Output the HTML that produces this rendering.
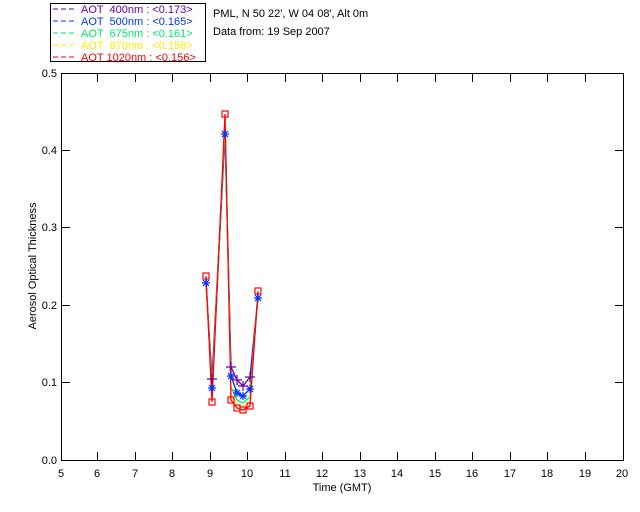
<!DOCTYPE html>
<html><head><style>
html,body{margin:0;padding:0;background:#fff;width:640px;height:512px;overflow:hidden}
svg text{font-family:"Liberation Sans",sans-serif;font-size:11px}
</style></head><body>
<svg width="640" height="512" viewBox="0 0 640 512" xmlns="http://www.w3.org/2000/svg">
<rect x="50.5" y="3.5" width="155" height="58" fill="none" stroke="#000"/>
<g stroke-dasharray="5,3" stroke-width="1">
<line x1="53" y1="9" x2="75" y2="9" stroke="#6a00a8"/>
<line x1="53" y1="21" x2="75" y2="21" stroke="#0033ff"/>
<line x1="53" y1="33" x2="75" y2="33" stroke="#00ee66"/>
<line x1="53" y1="45" x2="75" y2="45" stroke="#ffee00"/>
<line x1="53" y1="57" x2="75" y2="57" stroke="#ff0000"/>
</g>
<text x="81" y="13" fill="#6a00a8" xml:space="preserve">AOT  400nm : &lt;0.173&gt;</text>
<text x="81" y="25" fill="#0033ff" xml:space="preserve">AOT  500nm : &lt;0.165&gt;</text>
<text x="81" y="37" fill="#00ee66" xml:space="preserve">AOT  675nm : &lt;0.161&gt;</text>
<text x="81" y="49" fill="#ffee00" xml:space="preserve">AOT  870nm : &lt;0.158&gt;</text>
<text x="81" y="61" fill="#ff0000" xml:space="preserve">AOT 1020nm : &lt;0.156&gt;</text>
<text x="213" y="17" fill="#000">PML, N 50 22', W 04 08', Alt 0m</text>
<text x="213" y="35" fill="#000">Data from: 19 Sep 2007</text>
<rect x="61.5" y="73.5" width="562" height="387" fill="none" stroke="#000"/>
<g stroke="#000">
<path d="M97.5 460v-8M135.5 460v-8M172.5 460v-8M210.5 460v-8M247.5 460v-8M285.5 460v-8M322.5 460v-8M360.5 460v-8M397.5 460v-8M435.5 460v-8M472.5 460v-8M510.5 460v-8M547.5 460v-8M585.5 460v-8"/>
<path d="M97.5 74v8M135.5 74v8M172.5 74v8M210.5 74v8M247.5 74v8M285.5 74v8M322.5 74v8M360.5 74v8M397.5 74v8M435.5 74v8M472.5 74v8M510.5 74v8M547.5 74v8M585.5 74v8"/>
<path d="M62 382.5h8M62 305.5h8M62 227.5h8M62 150.5h8M623 382.5h-8M623 305.5h-8M623 227.5h-8M623 150.5h-8"/>
</g>
<g fill="#000" text-anchor="middle">
<text x="61" y="477">5</text><text x="97" y="477">6</text><text x="135" y="477">7</text><text x="172" y="477">8</text><text x="210" y="477">9</text><text x="247" y="477">10</text><text x="285" y="477">11</text><text x="322" y="477">12</text><text x="360" y="477">13</text><text x="397" y="477">14</text><text x="435" y="477">15</text><text x="472" y="477">16</text><text x="510" y="477">17</text><text x="547" y="477">18</text><text x="585" y="477">19</text><text x="622" y="477">20</text>
<text x="342" y="491">Time (GMT)</text>
</g>
<g fill="#000" text-anchor="end">
<text x="57" y="464">0.0</text><text x="57" y="386">0.1</text><text x="57" y="309">0.2</text><text x="57" y="231">0.3</text><text x="57" y="154">0.4</text><text x="57" y="77">0.5</text>
</g>
<text transform="translate(36,266) rotate(-90)" text-anchor="middle" fill="#000">Aerosol Optical Thickness</text>
<g fill="none" stroke-width="1.3">
<polyline stroke="#6a00a8" points="206,281 212,379 225,131 231,367 237,380 243,386 250,377 258,296"/>
<polyline stroke="#0033ff" points="206,283 212,388 225,134 231,376 237,393 243,396 250,389 258,298"/>
<polyline stroke="#00ee66" points="206,280 212,393 225,123 231,387 237,400 243,403 250,397 258,294"/>
<polyline stroke="#ffee00" points="206,277 212,398 225,117 231,394 237,405 243,407 250,402 258,292"/>
<polyline stroke="#ff0000" points="206,276 212,402 225,114 231,400 237,408 243,410 250,406 258,291"/>
</g>
<g fill="none" stroke="#ff0000" stroke-width="1.2">
<rect x="203" y="273" width="6" height="6"/><rect x="209" y="399" width="6" height="6"/><rect x="222" y="111" width="6" height="6"/><rect x="228" y="397" width="6" height="6"/><rect x="234" y="405" width="6" height="6"/><rect x="240" y="407" width="6" height="6"/><rect x="247" y="403" width="6" height="6"/><rect x="255" y="288" width="6" height="6"/>
</g>
<g stroke="#0033ff" stroke-width="1.2">
<path d="M202 283h8M206 279v8M203 280l6 6M209 280l-6 6 M208 388h8M212 384v8M209 385l6 6M215 385l-6 6 M221 134h8M225 130v8M222 131l6 6M228 131l-6 6 M227 376h8M231 372v8M228 373l6 6M234 373l-6 6 M233 393h8M237 389v8M234 390l6 6M240 390l-6 6 M239 396h8M243 392v8M240 393l6 6M246 393l-6 6 M246 389h8M250 385v8M247 386l6 6M253 386l-6 6 M254 298h8M258 294v8M255 295l6 6M261 295l-6 6"/>
</g>
<g stroke="#6a00a8" stroke-width="1.2">
<path d="M207 379h10M212 374v10M226 367h10M231 362v10M232 380h10M237 375v10M238 386h10M243 381v10M245 377h10M250 372v10"/>
</g>
</svg>
</body></html>
